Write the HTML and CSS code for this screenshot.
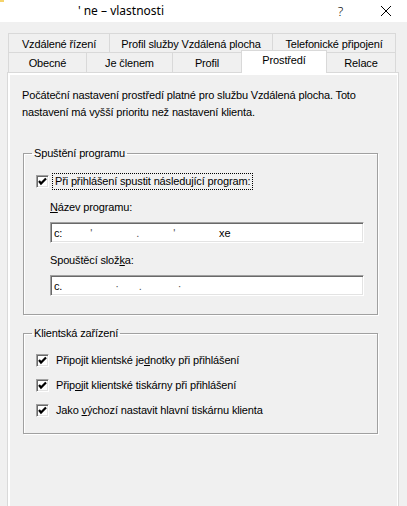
FILE: index.html
```html
<!DOCTYPE html>
<html lang="cs">
<head>
<meta charset="utf-8">
<title>vlastnosti</title>
<link rel="stylesheet" href="styles.css">
</head>
<body>
<div class="window">
  <div class="titlebar">
    <span class="appicon"></span>
    <span class="title"><span class="tick">'</span>ne – vlastnosti</span>
    <span class="help">?</span>
    <span class="close"><svg width="12" height="12" viewBox="0 0 12 12"><path d="M1 1 L11 11 M11 1 L1 11" stroke="#000" stroke-width="1" fill="none"/></svg></span>
  </div>

  <div class="tabs">
    <div class="tabrow row1">
      <div class="tab t-rizeni">Vzdálené řízení</div>
      <div class="tab t-profilsluzby">Profil služby Vzdálená plocha</div>
      <div class="tab t-telefon">Telefonické připojení</div>
    </div>
    <div class="tabrow row2">
      <div class="tab t-obecne">Obecné</div>
      <div class="tab t-clenem">Je členem</div>
      <div class="tab t-profil">Profil</div>
      <div class="tab t-prostredi selected">Prostředí</div>
      <div class="tab t-relace">Relace</div>
    </div>
  </div>

  <div class="panel">
    <div class="page">
      <p class="intro">Počáteční nastavení prostředí platné pro službu Vzdálená plocha. Toto nastavení má vyšší prioritu než nastavení klienta.</p>

      <fieldset class="group group-program">
        <legend>Spuštění programu</legend>
        <div class="check first">
          <span class="box"><svg width="9" height="9" viewBox="0 0 9 9"><path d="M1 4 L3 6.5 L8 1.5" stroke="#000" stroke-width="2.2" fill="none"/></svg></span>
          <span class="label focus">Při přihlášení spustit následující program:</span>
        </div>
        <div class="field-label"><u>N</u>ázev programu:</div>
        <div class="input">c:<span class="dot d1">'</span><span class="dot d2">.</span><span class="dot d3">'</span><span class="tail">xe</span></div>
        <div class="field-label">Spouštěcí slož<u>k</u>a:</div>
        <div class="input">c.<span class="dot d4">·</span><span class="dot d5">.</span><span class="dot d6">·</span></div>
      </fieldset>

      <fieldset class="group group-devices">
        <legend>Klientská zařízení</legend>
        <div class="check">
          <span class="box"><svg width="9" height="9" viewBox="0 0 9 9"><path d="M1 4 L3 6.5 L8 1.5" stroke="#000" stroke-width="2.2" fill="none"/></svg></span>
          <span class="label">Připojit klientské je<u>d</u>notky při přihlášení</span>
        </div>
        <div class="check">
          <span class="box"><svg width="9" height="9" viewBox="0 0 9 9"><path d="M1 4 L3 6.5 L8 1.5" stroke="#000" stroke-width="2.2" fill="none"/></svg></span>
          <span class="label">Přip<u>o</u>jit klientské tiskárny při přihlášení</span>
        </div>
        <div class="check">
          <span class="box"><svg width="9" height="9" viewBox="0 0 9 9"><path d="M1 4 L3 6.5 L8 1.5" stroke="#000" stroke-width="2.2" fill="none"/></svg></span>
          <span class="label">Jako <u>v</u>ýchozí nastavit hlavní tiskárnu klienta</span>
        </div>
      </fieldset>
    </div>
  </div>
</div>
</body>
</html>
```

FILE: styles.css
```css
* { box-sizing: border-box; }

html, body {
  margin: 0;
  padding: 0;
}

body {
  width: 407px;
  height: 506px;
  overflow: hidden;
  background: #f0f0f0;
  font-family: "Liberation Sans", Arial, sans-serif;
  font-size: 11px;
  letter-spacing: -0.15px;
  color: #000;
}

.window {
  width: 407px;
  height: 506px;
  overflow: hidden;
}

/* Title bar */
.titlebar {
  height: 22px;
  background: #fff;
  display: flex;
  align-items: center;
  position: relative;
}

.appicon {
  position: absolute;
  left: 0;
  top: 0;
  width: 4px;
  height: 2px;
  background: #f5d36b;
}

.title {
  margin-left: 78px;
  font-family: "Noto Sans", "DejaVu Sans", sans-serif;
  font-size: 12px;
  letter-spacing: 0;
  color: #000;
  line-height: 22px;
}

.title .tick {
  margin-right: 3px;
}

.help {
  margin-left: auto;
  margin-right: 37px;
  font-family: "Noto Sans", sans-serif;
  font-size: 13px;
  font-weight: 300;
  color: #000;
}

.close {
  margin-right: 15px;
  display: flex;
  align-items: center;
}

/* Tabs */
.tabs {
  margin-top: 11px;
  padding-left: 8px;
}

.tabrow {
  display: flex;
}

.row1 {
  height: 19px;
}

.row2 {
  height: 20px;
  position: relative;
  z-index: 1;
}

.tab {
  border: 1px solid #d9d9d9;
  border-bottom: none;
  border-right: none;
  background: #f0f0f0;
  display: flex;
  align-items: center;
  justify-content: center;
  white-space: nowrap;
}

.tab:last-child {
  border-right: 1px solid #d9d9d9;
}

.row1 .tab { padding-top: 1px; }

.t-rizeni { width: 101px; }
.t-profilsluzby { width: 163px; }
.t-telefon { width: 124px; }

.t-obecne { width: 78px; }
.t-clenem { width: 86px; }
.t-profil { width: 69px; border-right: none; }
.t-prostredi { width: 86px; }
.t-relace { width: 69px; border-left: none; }

.tab.selected {
  background: #fff;
  border: 1px solid #d9d9d9;
  border-bottom: none;
  margin-top: -2px;
  height: 23px;
  padding-bottom: 4px;
  position: relative;
  z-index: 2;
}

/* Panel */
.panel {
  margin-left: 7px;
  width: 392px;
  height: 440px;
  border: 1px solid #d9d9d9;
  background: #fff;
  padding: 2px 1px 0 2px;
}

.page {
  background: #f0f0f0;
  height: 100%;
  padding: 12px 0 0 12px;
}

.intro {
  margin: 0;
  line-height: 17px;
  width: 350px;
}

/* Group boxes */
.group {
  margin: 26px 0 0 1px;
  width: 355px;
  padding: 0 0 0 12px;
  border: 1px solid #a0a0a0;
  box-shadow: 1px 1px 0 #fff, inset 1px 1px 0 #fff;
  min-width: 0;
}

.group legend {
  margin-left: -4px;
  padding: 0 2px;
  line-height: 13px;
}

.group-program {
  padding-bottom: 18px;
}

.group-devices {
  margin-top: 12px;
  padding-bottom: 14px;
}

.check {
  display: flex;
  align-items: center;
  height: 17px;
  margin-top: 8px;
}

.check.first {
  margin-top: 13px;
}

.group-devices .check:first-of-type {
  margin-top: 12px;
}

.box {
  width: 13px;
  height: 13px;
  background: #fff;
  border-top: 1px solid #a0a0a0;
  border-left: 1px solid #a0a0a0;
  border-right: 1px solid #fff;
  border-bottom: 1px solid #fff;
  box-shadow: inset 1px 1px 0 #696969, inset -1px -1px 0 #e3e3e3;
  display: flex;
  align-items: center;
  justify-content: center;
  flex: none;
}

.box svg {
  display: block;
}

.label {
  margin-left: 5px;
  line-height: 15px;
  padding: 0 1px;
  border: 1px solid transparent;
}

.label.focus {
  margin-left: 3px;
  border: 1px dotted #000;
  padding: 0 2px 0 2px;
}

.field-label {
  margin: 11px 0 0 14px;
  line-height: 13px;
}

.input {
  margin: 8px 0 0 14px;
  width: 314px;
  height: 21px;
  background: #fff;
  border-top: 1px solid #a0a0a0;
  border-left: 1px solid #a0a0a0;
  border-right: 1px solid #fff;
  border-bottom: 1px solid #fff;
  box-shadow: inset 1px 1px 0 #696969, inset -1px -1px 0 #e3e3e3;
  padding: 0 3px;
  display: flex;
  align-items: center;
  white-space: nowrap;
}

.dot { color: #555; }
.d1 { margin-left: 28px; }
.d2 { margin-left: 44px; }
.d3 { margin-left: 34px; }
.tail { margin-left: 44px; }
.d4 { margin-left: 53px; }
.d5 { margin-left: 20px; }
.d6 { margin-left: 36px; }

u { text-decoration: underline; text-underline-offset: 1px; }
```
